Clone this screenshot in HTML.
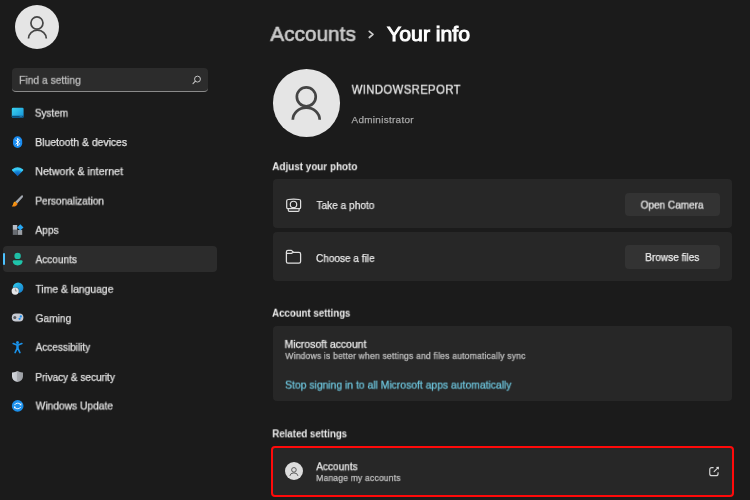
<!DOCTYPE html>
<html><head><meta charset="utf-8"><title>Your info</title>
<style>
*{margin:0;padding:0;box-sizing:border-box}
html,body{width:750px;height:500px;overflow:hidden;background:#1b1b1b;font-family:"Liberation Sans",sans-serif;color:#fff}
.a{position:absolute}
.tx{position:absolute;line-height:1;white-space:nowrap;transform-origin:0 0;will-change:transform;-webkit-text-stroke:0.25px currentColor}
.card{position:absolute;background:#272727;border-radius:4px}
.btn{position:absolute;background:#333333;border-radius:4px}
svg{position:absolute;overflow:visible}

</style></head><body>
<!-- sidebar avatar -->
<div class="a" style="left:14.9px;top:4.65px;width:44.3px;height:44.3px;border-radius:50%;background:#e5e5e5"></div>
<svg style="left:14.9px;top:4.65px" width="44.3" height="44.3" viewBox="0 0 44 44"><circle cx="21.8" cy="17.9" r="6.0" fill="none" stroke="#454545" stroke-width="1.7"/><path d="M13.4 33.3 A8.85 8.3 0 0 1 31.1 33.3" fill="none" stroke="#454545" stroke-width="1.7"/></svg>
<!-- search -->
<div class="a" style="left:12px;top:68px;width:196px;height:24px;background:#2c2c2c;border-radius:4px;border-bottom:1px solid #8a8a8a"></div>
<svg style="left:190px;top:73px" width="14" height="14" viewBox="0 0 14 14"><circle cx="7.5" cy="6.1" r="2.95" fill="none" stroke="#c4c4c4" stroke-width="1"/><path d="M5.4 8.2 L3 10.6" stroke="#c4c4c4" stroke-width="1.1" stroke-linecap="round"/></svg>
<!-- selected nav -->
<div class="a" style="left:3px;top:246px;width:214px;height:26px;background:#2c2c2c;border-radius:4px"></div>
<div class="a" style="left:3px;top:253.2px;width:2.4px;height:12px;background:#4cc2ff;border-radius:1.2px"></div>
<!-- nav icons -->
<svg style="left:0;top:0" width="30" height="420" viewBox="0 0 30 420">
 <defs>
  <linearGradient id="gsys" x1="0" y1="0" x2="1" y2="1"><stop offset="0" stop-color="#3ad4f2"/><stop offset="1" stop-color="#1690d6"/></linearGradient>
  <radialGradient id="rwifi" gradientUnits="userSpaceOnUse" cx="17.6" cy="176.3" r="8.8"><stop offset="0" stop-color="#0a58ae"/><stop offset="0.4" stop-color="#1272c8"/><stop offset="0.62" stop-color="#1a94e0"/><stop offset="0.78" stop-color="#36cdf8"/><stop offset="1" stop-color="#3ac8f2"/></radialGradient>
  <linearGradient id="gbr" x1="0" y1="0" x2="1" y2="1"><stop offset="0" stop-color="#ffc21a"/><stop offset="1" stop-color="#e8620c"/></linearGradient>
  <linearGradient id="gglobe" x1="0" y1="0" x2="1" y2="1"><stop offset="0" stop-color="#30d0ee"/><stop offset="1" stop-color="#1478cc"/></linearGradient>
  <linearGradient id="gsh" x1="0" y1="0" x2="1" y2="0"><stop offset="0" stop-color="#d4d7dc"/><stop offset="0.5" stop-color="#c2c5ca"/><stop offset="0.5" stop-color="#a8abb0"/><stop offset="1" stop-color="#9a9da2"/></linearGradient>
 </defs>
 <!-- System -->
 <rect x="11.8" y="107.8" width="11.8" height="10" rx="1.2" fill="url(#gsys)"/>
 <path d="M11.8 115.8 H23.6 V116.7 Q23.6 117.8 22.5 117.8 H12.9 Q11.8 117.8 11.8 116.7 Z" fill="#0a4e7e"/><rect x="19.6" y="116.3" width="2.6" height="0.7" fill="#5aa8d0" opacity="0.6"/>
 <!-- Bluetooth -->
 <rect x="13" y="136.3" width="9.2" height="11.6" rx="4.6" fill="#1a8cf0"/>
 <path d="M15.6 139.8 L19.6 143.9 L17.6 145.9 V138.3 L19.6 140.3 L15.6 144.4" fill="none" stroke="#fff" stroke-width="0.9" stroke-linejoin="round"/>
 <!-- Wifi -->
 <path d="M17.6 176.3 L12.1 170.4 Q11.6 169.8 12.3 169.3 A8.7 8.7 0 0 1 22.9 169.3 Q23.6 169.8 23.1 170.4 Z" fill="url(#rwifi)"/>
 <!-- Paintbrush -->
 <path d="M22.4 195.3 Q23.6 195.8 22.8 197.2 L17.2 203.4 L15.3 201.8 L21 195.9 Q21.6 195.1 22.4 195.3 Z" fill="#a3a8b0"/>
 <path d="M15 201.5 L17.6 203.8 Q16.8 206.6 13.5 206.6 Q12 206.6 11.8 206.2 Q13.2 205.4 13.3 203.6 Q13.5 202 15 201.5 Z" fill="url(#gbr)"/>
 <!-- Apps -->
 <rect x="12.8" y="225" width="4.4" height="4.8" fill="#b8bcc4"/>
 <rect x="12.8" y="230" width="4.4" height="4.9" fill="#686c72"/>
 <rect x="17.6" y="230" width="4.6" height="4.9" fill="#9a9ea4"/>
 <path d="M20.3 224.2 L23.5 227.4 L20.3 230.6 L17.1 227.4 Z" fill="#28a8f4"/>
 <!-- Accounts -->
 <circle cx="17.6" cy="255.9" r="3.2" fill="#1fbfa6"/>
 <path d="M12.8 261.3 Q12.8 260.3 13.8 260.3 H21.5 Q22.5 260.3 22.5 261.3 Q22.5 265.4 17.65 265.4 Q12.8 265.4 12.8 261.3 Z" fill="#1fc4aa"/>
 <!-- Time -->
 <circle cx="18.1" cy="287.8" r="5.3" fill="url(#gglobe)"/>
 <circle cx="15.2" cy="291.1" r="3.95" fill="#1b1b1b" opacity="0.6"/>
 <circle cx="15.2" cy="291.1" r="3.6" fill="#e4e5e8"/>
 <path d="M15.4 288.6 V291 H17.2" fill="none" stroke="#8a8a8a" stroke-width="0.75"/>
 <!-- Gaming -->
 <rect x="11.8" y="313.6" width="11.6" height="7.8" rx="3.9" fill="#c6cad2"/>
 <circle cx="14.8" cy="317.4" r="1.5" fill="#55585e"/>
 <circle cx="20.8" cy="316.5" r="1.15" fill="#1e8ff0"/>
 <circle cx="19.6" cy="318.8" r="1.15" fill="#1e8ff0"/>
 <!-- Accessibility -->
 <circle cx="17.5" cy="342.4" r="1.5" fill="#1a92ea"/>
 <path d="M13.2 343.6 L17.5 345.2 L21.9 343.6 M17.5 345.2 V348.2 M15.1 352.6 L17.5 347.6 L19.9 352.6" fill="none" stroke="#1a92ea" stroke-width="1.6" stroke-linecap="round" stroke-linejoin="round"/>
 <rect x="16.4" y="344.6" width="2.2" height="4.2" rx="0.8" fill="#1a92ea"/>
 <!-- Privacy -->
 <path d="M17.5 371 Q20 372.6 23 372.4 V376.4 Q23 380.4 17.5 382 Q12 380.4 12 376.4 V372.4 Q15 372.6 17.5 371 Z" fill="url(#gsh)"/>
 <!-- Update -->
 <circle cx="17.65" cy="405.9" r="5.85" fill="#1b8fea"/>
 <path d="M14.5 405.1 A3.6 3.3 0 0 1 20.6 404.4 M20.8 406.9 A3.6 3.3 0 0 1 14.7 407.5" fill="none" stroke="#f4f8ff" stroke-width="0.95"/>
 <path d="M21.4 403.1 L21.3 405.6 L19.2 404.9 Z M13.9 408.8 L14.1 406.3 L16.1 407.1 Z" fill="#f4f8ff"/>
</svg>

<!-- big avatar -->
<div class="a" style="left:272.7px;top:69.3px;width:67.6px;height:67.6px;border-radius:50%;background:#e5e5e5"></div>
<svg style="left:272.7px;top:69.3px" width="67.6" height="67.6" viewBox="0 0 44 44"><circle cx="21.67" cy="18.1" r="6.15" fill="none" stroke="#444444" stroke-width="1.75"/><path d="M12.9 33.1 A8.75 7.95 0 0 1 30.4 33.1" fill="none" stroke="#444444" stroke-width="1.75"/></svg>

<!-- cards -->
<div class="card" style="left:273px;top:179px;width:458.6px;height:48.8px"></div>
<div class="card" style="left:273px;top:232.2px;width:458.6px;height:48.4px"></div>
<div class="btn" style="left:624.5px;top:192.6px;width:95.6px;height:23.3px"></div>
<div class="btn" style="left:624.5px;top:245px;width:95.6px;height:23.5px"></div>
<!-- camera icon -->
<svg style="left:280px;top:190.5px" width="30" height="30" viewBox="0 0 30 30">
 <path d="M6.7 10 Q6.7 8.6 8.2 8.5 Q13.6 7.9 19.2 8.5 Q20.6 8.6 20.6 10 V16.6 Q20.6 17.6 19.6 17.6 H7.7 Q6.7 17.6 6.7 16.6 Z" fill="none" stroke="#e0e0e0" stroke-width="1.2"/>
 <circle cx="13.5" cy="13.45" r="3.2" fill="none" stroke="#e0e0e0" stroke-width="1.2"/>
 <path d="M8.3 17.8 V19.3 Q8.3 20.3 9.3 20.3 H18.1 Q19.1 20.3 19.1 19.3 V17.8" fill="none" stroke="#e0e0e0" stroke-width="1.2"/>
</svg>
<!-- folder icon -->
<svg style="left:280px;top:245px" width="30" height="25" viewBox="0 0 30 25">
 <path d="M6.4 6.9 Q6.4 5.4 7.9 5.4 H11.4 L13.5 7.3 H19 Q20.6 7.3 20.6 8.9 V16.6 Q20.6 18.2 19 18.2 H7.9 Q6.4 18.2 6.4 16.6 Z M6.4 8.4 H11.3 L13.5 7.3" fill="none" stroke="#e0e0e0" stroke-width="1.25" stroke-linejoin="round"/>
</svg>
<div class="card" style="left:273.4px;top:326px;width:458.2px;height:75.3px"></div>
<!-- related -->
<div class="a" style="left:271.4px;top:445.5px;width:462.8px;height:51.6px;background:#272727;border:2.8px solid #ff0a0a;border-radius:4px"></div>
<div class="a" style="left:284.6px;top:462px;width:18.2px;height:18.2px;border-radius:50%;background:#dcdcdc"></div>
<svg style="left:284.6px;top:462px" width="18.2" height="18.2" viewBox="0 0 44 44"><circle cx="21.6" cy="19" r="5.6" fill="none" stroke="#5a5a5a" stroke-width="2.4"/><path d="M11.9 32.6 A9.7 7 0 0 1 31.2 32.6" fill="none" stroke="#5a5a5a" stroke-width="2.4" stroke-linecap="round"/></svg>
<!-- external link icon -->
<svg style="left:705px;top:462px" width="18" height="18" viewBox="0 0 18 18">
 <path d="M8.6 5.65 H6.75 Q4.75 5.65 4.75 7.65 V11.65 Q4.75 13.65 6.75 13.65 H11.05 Q13.05 13.65 13.05 11.65 V10.3" fill="none" stroke="#d6d6d6" stroke-width="1.15"/>
 <path d="M9.1 9.7 L12.6 6.1" fill="none" stroke="#d6d6d6" stroke-width="1.1" stroke-linecap="round"/>
 <path d="M10.9 4.9 L13.9 4.8 L13.8 7.8 Z" fill="#e0e0e0"/>
</svg>
<!-- breadcrumb chevron -->
<svg style="left:365px;top:28px" width="12" height="14" viewBox="0 0 12 14"><path d="M4.3 3.3 L8 6.3 L4.3 9.5" fill="none" stroke="#cccccc" stroke-width="1.7" stroke-linecap="round" stroke-linejoin="round"/></svg>

<span class="tx" style="left:34px;top:107px;font-size:11px;font-weight:400;color:#e4e4e4;transform:translate(0.81px,0.67px) scaleX(0.9075)">System</span>
<span class="tx" style="left:35px;top:136px;font-size:11px;font-weight:400;color:#e4e4e4;transform:translate(0.26px,0.97px) scaleX(0.9440)">Bluetooth &amp; devices</span>
<span class="tx" style="left:35px;top:166px;font-size:11px;font-weight:400;color:#e4e4e4;transform:translate(0.24px,0.07px) scaleX(0.9694)">Network &amp; internet</span>
<span class="tx" style="left:35px;top:195px;font-size:11px;font-weight:400;color:#e4e4e4;transform:translate(0.35px,0.62px) scaleX(0.9122)">Personalization</span>
<span class="tx" style="left:35px;top:224px;font-size:11px;font-weight:400;color:#e4e4e4;transform:translate(0.33px,0.77px) scaleX(0.9320)">Apps</span>
<span class="tx" style="left:35px;top:254px;font-size:11px;font-weight:400;color:#e4e4e4;transform:translate(0.55px,0.17px) scaleX(0.9142)">Accounts</span>
<span class="tx" style="left:35px;top:283px;font-size:11px;font-weight:400;color:#e4e4e4;transform:translate(0.50px,0.77px) scaleX(0.9405)">Time &amp; language</span>
<span class="tx" style="left:35px;top:313px;font-size:11px;font-weight:400;color:#e4e4e4;transform:translate(0.53px,0.07px) scaleX(0.9255)">Gaming</span>
<span class="tx" style="left:35px;top:341px;font-size:11px;font-weight:400;color:#e4e4e4;transform:translate(0.63px,0.77px) scaleX(0.9102)">Accessibility</span>
<span class="tx" style="left:35px;top:371px;font-size:11px;font-weight:400;color:#e4e4e4;transform:translate(0.35px,0.92px) scaleX(0.9093)">Privacy &amp; security</span>
<span class="tx" style="left:35px;top:400px;font-size:11px;font-weight:400;color:#e4e4e4;transform:translate(0.63px,0.47px) scaleX(0.9310)">Windows Update</span>
<span class="tx" style="left:19px;top:74px;font-size:11px;font-weight:400;color:#c4c4c4;transform:translate(0.12px,0.77px) scaleX(0.9333)">Find a setting</span>
<span class="tx" style="left:270px;top:22px;font-size:21px;font-weight:400;color:#cccccc;transform:translate(0.31px,0.90px) scaleX(0.9896);-webkit-text-stroke:0.6px currentColor">Accounts</span>
<span class="tx" style="left:387px;top:22px;font-size:21px;font-weight:400;color:#ffffff;transform:translate(0.10px,0.90px) scaleX(1.0101);-webkit-text-stroke:1.0px currentColor">Your info</span>
<span class="tx" style="left:351px;top:82px;font-size:13.5px;font-weight:400;color:#f0f0f0;transform:translate(0.66px,0.67px) scaleX(0.8435);letter-spacing:0.4px">WINDOWSREPORT</span>
<span class="tx" style="left:351px;top:114px;font-size:9.5px;font-weight:400;color:#a6a6a6;transform:translate(0.52px,0.68px) scaleX(1.0416);letter-spacing:0.3px">Administrator</span>
<span class="tx" style="left:272px;top:161px;font-size:11px;font-weight:700;color:#eeeeee;transform:translate(0.25px,0.22px) scaleX(0.8987);-webkit-text-stroke:0">Adjust your photo</span>
<span class="tx" style="left:316px;top:199px;font-size:10.5px;font-weight:400;color:#e8e8e8;transform:translate(0.47px,0.97px) scaleX(0.9646)">Take a photo</span>
<span class="tx" style="left:316px;top:252px;font-size:10.5px;font-weight:400;color:#e8e8e8;transform:translate(0.04px,0.97px) scaleX(0.9559)">Choose a file</span>
<span class="tx" style="left:640px;top:199px;font-size:10.5px;font-weight:400;color:#eeeeee;transform:translate(0.64px,0.62px) scaleX(0.9544)">Open Camera</span>
<span class="tx" style="left:645px;top:251px;font-size:10.5px;font-weight:400;color:#eeeeee;transform:translate(0.25px,0.97px) scaleX(0.9558)">Browse files</span>
<span class="tx" style="left:272px;top:307px;font-size:11px;font-weight:700;color:#eeeeee;transform:translate(0.11px,0.67px) scaleX(0.8775);-webkit-text-stroke:0">Account settings</span>
<span class="tx" style="left:284px;top:338px;font-size:11px;font-weight:400;color:#eeeeee;transform:translate(0.60px,0.82px) scaleX(0.9486)">Microsoft account</span>
<span class="tx" style="left:285px;top:351px;font-size:9px;font-weight:400;color:#c2c2c2;transform:translate(0.29px,0.83px) scaleX(0.9513);letter-spacing:0.2px">Windows is better when settings and files automatically sync</span>
<span class="tx" style="left:285px;top:379px;font-size:11px;font-weight:400;color:#6ec6de;transform:translate(0.09px,0.57px) scaleX(0.9421)">Stop signing in to all Microsoft apps automatically</span>
<span class="tx" style="left:272px;top:428px;font-size:11px;font-weight:700;color:#eeeeee;transform:translate(0.31px,0.32px) scaleX(0.8798);-webkit-text-stroke:0">Related settings</span>
<span class="tx" style="left:316px;top:461px;font-size:11px;font-weight:400;color:#eeeeee;transform:translate(0.24px,0.22px) scaleX(0.9150)">Accounts</span>
<span class="tx" style="left:316px;top:473px;font-size:9px;font-weight:400;color:#c2c2c2;transform:translate(0.18px,0.93px) scaleX(0.9473);letter-spacing:0.2px">Manage my accounts</span>
</body></html>
